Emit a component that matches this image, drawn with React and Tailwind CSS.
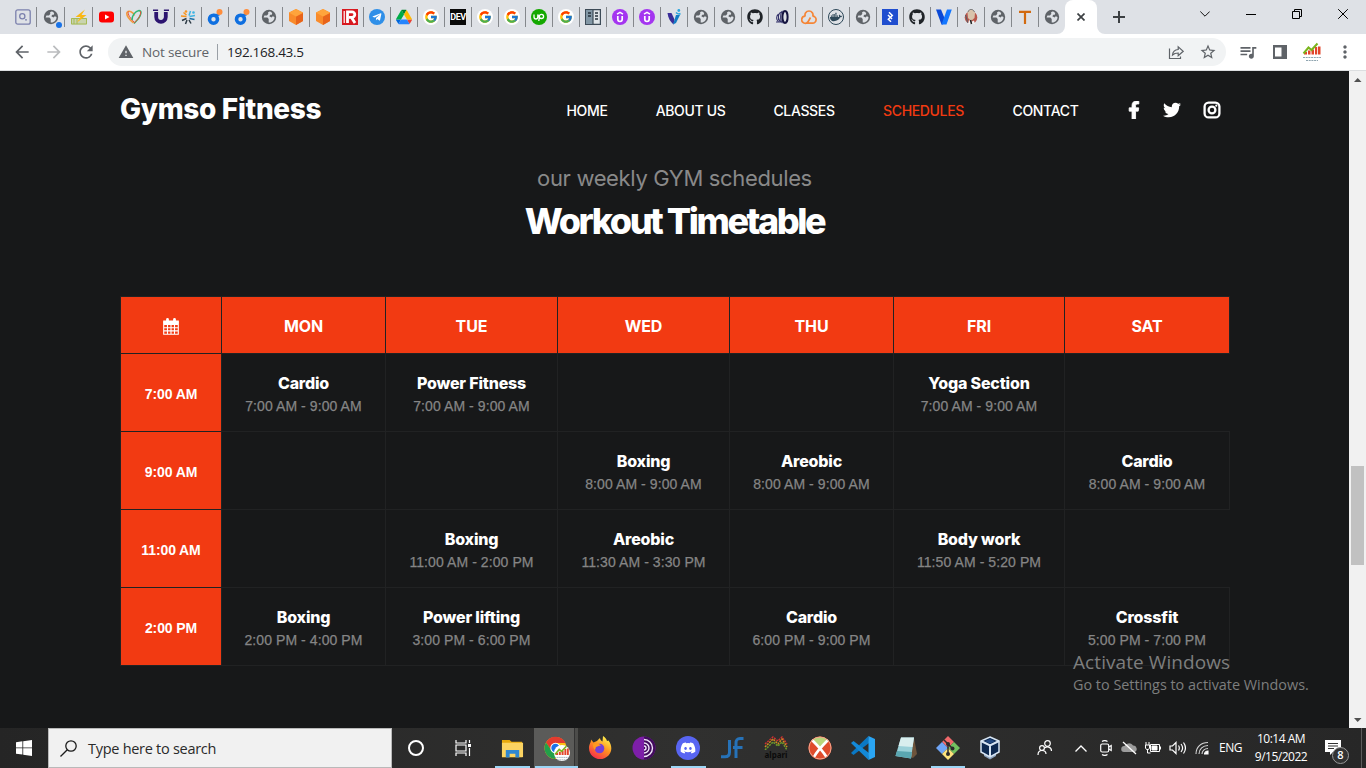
import React from "react";
import { FcGoogle } from "react-icons/fc";
import { FaGithub, FaTelegramPlane, FaDocker, FaDiscord, FaFacebookF, FaTwitter } from "react-icons/fa";
import { MdQueueMusic, MdStarBorder, MdArrowBack, MdArrowForward, MdRefresh, MdMoreVert, MdWarning } from "react-icons/md";

/* ---------- tab favicons ---------- */
const S = ({ children, box = "0 0 16 16", className = "size-4" }) => (
  <svg viewBox={box} className={className} fill="none">{children}</svg>
);
const Globe = () => (
  <S>
    <circle cx="8" cy="8" r="7.200" fill="#5f6368" />
    <path d="M8.500 2.600C7 3 6.600 4 7.400 4.800L6 6.600H3.400L2.600 8.400h3.800l1.300 1.500v3.600c3.400.3 5.800-2.200 5.800-5.500l-1.700-.8-1.300 1.200-2.200-1.200 1-1.500h1.500l.4-1.700C10.500 3.300 9.500 2.600 8.500 2.600Z" fill="#dee1e6" />
  </S>
);
const Search1 = () => (
  <S>
    <rect x=".8" y=".8" width="14.400" height="14.400" rx="2" stroke="#7b80ad" strokeWidth="1.300" />
    <circle cx="7.300" cy="7.300" r="2.600" stroke="#7b80ad" strokeWidth="1.300" />
    <path d="M10 10.800h2" stroke="#7b80ad" strokeWidth="1.300" />
  </S>
);
const GlobeDot = () => (
  <span className="relative flex">
    <Globe />
    <span className="absolute -right-[3px] -bottom-[3px] size-[6px] rounded-full bg-[#1a73e8]" />
  </span>
);
const Bolt = () => (
  <S>
    <path d="M0 9h16v6.500H0z" fill="#c9d4ae" />
    <path d="M.5 9.500h15v5.500H.5zM3 9v6M6 9v6" stroke="#a5ba55" />
    <path d="M14 .5 4.500 8h5L6 13.500 15.500 6h-5Z" fill="#fbb713" />
  </S>
);
const YouTube = () => (
  <S><rect x="0" y="2.500" width="15" height="11" rx="3" fill="#f00" /><path d="m6 5.500 4.500 2.500L6 10.500Z" fill="#fff" /></S>
);
const Loops = () => (
  <S>
    <path d="M7.500 14C4 11 0 6 1 3.500 3 1 7 3 8.500 6.500" stroke="#f29a3c" strokeWidth="1.500" />
    <path d="M2.500 2.500C1 5 5 10 8 13" stroke="#e8503a" strokeWidth="1" />
    <path d="M6 11C6 7 9 2 13 1.500c3 0 2.500 4-.5 8L8 14.500" stroke="#2eb872" strokeWidth="1.500" />
    <path d="M14 2c2 2-1 8-6 12" stroke="#e8503a" strokeWidth="1" />
  </S>
);
const Horseshoe = () => (
  <S>
    <path d="M3.200 3v5a4.800 4.800 0 0 0 9.600 0V3" stroke="#2c1470" strokeWidth="3.800" />
    <path d="M0 1.200h5.100M10.900 1.200H16" stroke="#2c1470" strokeWidth="1.600" />
  </S>
);
const Burst = () => (
  <S>
    <g strokeWidth="1.500">
      <path d="M6.500 7.500 1 7M6.500 6 3.500 3.500" stroke="#f7941e" /><path d="M9 6.500 10.500 2M9.500 7.500 15 6.500" stroke="#3eb4e4" />
      <path d="m9.500 9.500 5 1" stroke="#1c6ea4" /><path d="m6.500 9.500-4.500 2m5-.5-1.500 4m3.500-4 2 3.500" stroke="#2d3a45" />
    </g>
    <circle cx="6" cy="2.500" r="1.300" fill="#f7941e" /><circle cx="13.500" cy="3.500" r="1.300" fill="#3eb4e4" />
  </S>
);
const BlueD = () => (
  <S>
    <circle cx="6.500" cy="10.200" r="4" stroke="#0f6fe0" strokeWidth="3.600" />
    <path d="M6.500 5.800h6" stroke="#0f6fe0" strokeWidth="2" />
    <circle cx="12.500" cy="3" r="3" fill="#ff8d3b" />
  </S>
);
const Cube = () => (
  <S>
    <path d="m8 0 7 3.500v8.500L8 16l-7-4V3.500Z" fill="#f98b2b" /><path d="M8 7.500 15 4v8l-7 4Z" fill="#e8641b" />
    <path d="m8 0 7 3.700-7 3.800-7-3.800Z" fill="#ffa43c" />
  </S>
);
const Rbox = () => (
  <S>
    <path d="M0 0h16v16H0z" fill="#d81920" />
    <path d="M2.200 2v12" stroke="#fff" strokeWidth="1.200" />
    <path d="M5.500 14V2.800h4.500a2.600 2.600 0 0 1 0 5.600H7m2.500 0 3.500 5.600" stroke="#fff" strokeWidth="2.800" />
  </S>
);
const Telegram = () => (
  <span className="flex size-4 items-center justify-center rounded-full bg-[#2f8fe8]"><FaTelegramPlane className="mr-px size-[10px] text-white" /></span>
);
const Drive = () => (
  <S box="0 0 87.300 78">
    <path d="m6.600 66.850 3.850 6.650c.8 1.400 1.950 2.500 3.300 3.300l13.750-23.800H0c0 1.550.4 3.100 1.200 4.500z" fill="#0066da" />
    <path d="M43.650 25 29.900 1.200c-1.350.8-2.500 1.900-3.300 3.300L1.200 48.500A9 9 0 0 0 0 53h27.500z" fill="#00ac47" />
    <path d="M73.550 76.800c1.350-.8 2.500-1.900 3.300-3.300l1.600-2.750L86.100 57.500c.8-1.400 1.200-2.950 1.200-4.500H59.800l5.850 11.500z" fill="#ea4335" />
    <path d="M43.650 25 57.400 1.200C56.050.4 54.500 0 52.900 0H34.400c-1.600 0-3.150.45-4.500 1.200z" fill="#00832d" />
    <path d="M59.800 53H27.500L13.750 76.800c1.350.8 2.900 1.200 4.500 1.200h50.800c1.600 0 3.150-.45 4.500-1.200z" fill="#2684fc" />
    <path d="m73.400 26.500-12.700-22c-.8-1.400-1.950-2.500-3.300-3.300L43.650 25 59.800 53h27.450c0-1.550-.4-3.100-1.200-4.500z" fill="#ffba00" />
  </S>
);
const Google = () => (
  <span className="flex size-4 items-center justify-center rounded-full bg-white"><FcGoogle className="size-[14px]" /></span>
);
const Dev = () => (
  <span className="flex size-4 items-center justify-center bg-[#0a0a0a] font-['Roboto'] text-[9px] leading-none font-bold tracking-[-0.4px] text-white">DEV</span>
);
const Upwork = () => (
  <S>
    <circle cx="8" cy="8" r="8" fill="#14a800" />
    <path d="M3 5.500v2.600a1.900 1.900 0 0 0 3.800 0V5.500c.6 2 2 4 3.700 4a2.100 2.100 0 1 0-2.100-2.200L7.800 12" stroke="#fff" strokeWidth="1.300" />
  </S>
);
const Panel = () => (
  <S>
    <path d="M.6.6h14.800v14.800H.6z" fill="#dfe5e9" stroke="#3d4b57" strokeWidth="1.200" />
    <path d="M1 1h7v14H1z" fill="#8297a5" /><path d="M8 1v14" stroke="#3d4b57" strokeWidth="1.200" />
    <path d="M3 4h3M3 7h3M10 4h3M10 7h3M10 10h3" stroke="#26323b" strokeWidth="1.600" />
  </S>
);
const PurpleU = () => (
  <S>
    <circle cx="8" cy="8" r="8" fill="#a435f0" />
    <path d="M5.800 7v3.300a2.200 2.200 0 0 0 4.400 0V7" stroke="#fff" strokeWidth="1.700" />
    <path d="m5 5.200 3-1.900 3 1.900" stroke="#fff" strokeWidth="1.400" />
  </S>
);
const Vi = () => (
  <S>
    <path d="M1.500 4h4l3 6.500-1 5C4.500 13 2 9 1.500 4Z" fill="#3a2d99" /><path d="M10 6h4L10 14l-3 1.500Z" fill="#127cc4" />
    <path d="M10 3.500c2 2 3 2 4.500 1" stroke="#2ba6df" strokeWidth="1.600" /><circle cx="12.800" cy="1.500" r="1.400" fill="#2ba6df" />
  </S>
);
const Coil = () => (
  <S>
    <ellipse cx="11" cy="8" rx="2.600" ry="6" stroke="#151440" strokeWidth="2" />
    <path d="M8.500 2C6 4 6 12 8.500 14M6.500 3C4 6 4 10 6.500 13M4.500 5v6M4.500 5C2 7 2 11 4.500 12.500M2 13h5" stroke="#34336b" strokeWidth="1.100" />
  </S>
);
const OrangeCloud = () => (
  <S>
    <path d="M4.300 7.500a4 4 0 1 1 7.400 0M4.300 7.200a3.500 3.500 0 1 0 2.900 5.300L9.500 8.500M11.700 7.200a3.500 3.500 0 1 1-.2 7H5" stroke="#f58536" strokeWidth="1.700" />
  </S>
);
const DockerIcon = () => (
  <span className="flex size-4 items-center justify-center rounded-full border border-[#2d4758]"><FaDocker className="size-[12px] text-[#2d4758]" /></span>
);
const BlueBox = () => (
  <S>
    <path d="M0 0h16v16H0z" fill="#204ecf" />
    <path d="m7 3.200 3.300 3.300-4 3.800 2.700 2.500M6 6l4 4" stroke="#fff" strokeWidth="1.500" />
  </S>
);
const BlueV = () => (
  <S>
    <path d="M0 .500h5l3.500 8.500L7 15.500H5.500Z" fill="#0b49d6" /><path d="M11 .500h4.800L10.500 15.500H5.500Z" fill="#1477ff" />
  </S>
);
const Butler = () => (
  <S>
    <circle cx="8" cy="8.500" r="6.300" fill="#b8564b" /><path d="M2.500 6C4 10 4 12 5 14" stroke="#4f5f6b" />
    <path d="M4.500 4C5-.5 11.500-.5 12 4l-.5 5L8 12 5 9Z" fill="#d9c3ab" />
    <path d="M5 3C6-.5 10-.5 11.500 3" stroke="#777" /><path d="m5 15 1-4 3 1.500 2-1 1 3.500Z" fill="#f2f2f2" /><path d="m7.500 11 1 4" stroke="#222" strokeWidth="1.500" />
  </S>
);
const LetterT = () => <S><path d="M2 2.900h12M8 2.700V15" stroke="#d26a10" strokeWidth="2.200" /></S>;
const GH = () => <FaGithub className="size-4 text-[#1f2328]" />;

const tabs = [
  Search1, GlobeDot, Bolt, YouTube, Loops, Horseshoe, Burst, BlueD, BlueD, Globe, Cube, Cube, Rbox, Telegram, Drive, Google, Dev, Google,
  Google, Upwork, Google, Panel, PurpleU, PurpleU, Vi, Globe, Globe, GH, Coil, OrangeCloud, DockerIcon, Globe, BlueBox, GH, BlueV, Butler, Globe, LetterT, Globe,
];

function TabStrip() {
  return (
    <div className="flex h-[34px] bg-[#dee1e6] pl-[9px]">
      {tabs.map((Icon, i) => (
        <div key={i} className={`flex h-[34px] shrink-0 items-center ${i < 4 ? "w-[28px]" : i === 38 ? "w-[26px]" : "w-[27px]"}`}>
          <div className="flex flex-1 justify-center"><Icon /></div>
          {i < 38 && <div className="h-5 w-px bg-[#85888c]" />}
        </div>
      ))}
      <div className="relative flex w-8 shrink-0 items-center justify-center rounded-t-lg bg-white">
        <svg viewBox="0 0 8 8" className="absolute bottom-0 -left-2 size-2"><path d="M8 0v8H0a8 8 0 0 0 8-8Z" fill="#fff" /></svg>
        <svg viewBox="0 0 8 8" className="absolute -right-2 bottom-0 size-2"><path d="M0 0v8h8a8 8 0 0 1-8-8Z" fill="#fff" /></svg>
        <svg viewBox="0 0 8 8" className="size-2" stroke="#3c4043" strokeWidth="1.700"><path d="m.5.5 7 7m0-7-7 7" /></svg>
      </div>
      <div className="flex w-[44px] items-center justify-center">
        <svg viewBox="0 0 12 12" className="size-3" stroke="#3c4043" strokeWidth="2"><path d="M6 0v12M0 6h12" /></svg>
      </div>
      <div className="ml-auto flex h-7 shrink-0 items-center">
        <div className="flex w-[46px] justify-center"><svg viewBox="0 0 10 6" className="h-[6px] w-[10px]" fill="none" stroke="#111"><path d="m.3.500 4.700 4.700L9.700.500" /></svg></div>
        <div className="flex w-[46px] justify-center"><div className="h-px w-[10px] bg-black" /></div>
        <div className="flex w-[46px] justify-center"><svg viewBox="0 0 10 10" className="size-[10px]" fill="none" stroke="#000"><path d="M.5 2.500h7v7h-7zM2.500 2.500v-2h7v7h-2" /></svg></div>
        <div className="flex w-[46px] justify-center"><svg viewBox="0 0 10 10" className="size-[10px]" fill="none" stroke="#000"><path d="m.2.200 9.600 9.600m0-9.600L.2 9.800" /></svg></div>
      </div>
    </div>
  );
}

const MiniChart = ({ className }) => (
  <svg viewBox="0 0 20 20" className={className}>
    <circle cx="10" cy="10" r="10" fill="#fff" />
    <path d="M2 12.500V10h3v2.500zM6 12.500V8.500h2.500v4zM9.500 12.500V7.500H12v5zM13 12.500V5h2.200v7.500zM16 12.500V4.500h2.500v8z" fill="#e2452a" />
    <path d="m1.500 11.500 5-6 3 2.500 6-6.500" fill="none" stroke="#7ab51d" strokeWidth="2" />
    <path d="M1 15.500h18M4 18.500h12" stroke="#8fa5b0" strokeWidth="1" strokeDasharray="2 .7" />
  </svg>
);

function Toolbar() {
  return (
    <div className="flex h-[37px] items-center border-b border-[#dcdee0] bg-white text-[#5f6368]">
      <div className="flex w-[108px] items-center gap-3 pl-3">
        <MdArrowBack className="size-5" />
        <MdArrowForward className="size-5 text-[#babcbe]" />
        <MdRefresh className="size-5" />
      </div>
      <div className="flex h-7 w-[1118px] items-center rounded-full bg-[#f1f3f4] pr-[9px] pl-[10px] font-['Open_Sans',sans-serif] text-[13.500px]">
        <MdWarning className="size-4" />
        <span className="ml-2 w-[67px] whitespace-nowrap tracking-[-0.150px]">Not secure</span>
        <span className="mr-[9px] ml-2 h-4 w-px bg-[#9aa0a6]" />
        <span className="tracking-[-0.280px] whitespace-nowrap text-[#202124]">192.168.43.5</span>
        <span className="ml-auto flex items-center gap-[15px]">
          <svg viewBox="0 0 16 16" className="size-4" fill="none" stroke="#5f6368" strokeWidth="1.200"><path d="M1.500 4.500v10h11v-2M4.500 11c.3-3.500 2.500-5.300 5.700-5.500V2.800l5 4.500-5 4.400V9C7.500 9 6 9.500 4.500 11Z" /></svg>
          <MdStarBorder className="size-[18px]" />
        </span>
      </div>
      <div className="ml-[12px] flex items-center">
        <MdQueueMusic className="size-5" />
        <svg viewBox="0 0 14 14" className="ml-[15px] h-[14px] w-[14px]"><path d="M0 0h14v14H0zM2 2.500v9h6.500v-9z" fill="#5f6368" fillRule="evenodd" /></svg>
        <MiniChart className="ml-[15px] size-5" />
        <MdMoreVert className="ml-[13px] size-[20px]" />
      </div>
    </div>
  );
}

/* ---------- page ---------- */
const nav = [
  ["HOME", "w-[42px]"], ["ABOUT US", "w-[69px]"], ["CLASSES", "w-[62px]"], ["SCHEDULES", "w-[81px]"], ["CONTACT", "w-[67px]"],
];
const days = ["MON", "TUE", "WED", "THU", "FRI", "SAT"];
const rows = [
  ["7:00 AM", [["Cardio", "7:00 AM - 9:00 AM"], ["Power Fitness", "7:00 AM - 9:00 AM"], null, null, ["Yoga Section", "7:00 AM - 9:00 AM"]]],
  ["9:00 AM", [null, null, ["Boxing", "8:00 AM - 9:00 AM"], ["Areobic", "8:00 AM - 9:00 AM"], null, ["Cardio", "8:00 AM - 9:00 AM"]]],
  ["11:00 AM", [null, ["Boxing", "11:00 AM - 2:00 PM"], ["Areobic", "11:30 AM - 3:30 PM"], null, ["Body work", "11:50 AM - 5:20 PM"]]],
  ["2:00 PM", [["Boxing", "2:00 PM - 4:00 PM"], ["Power lifting", "3:00 PM - 6:00 PM"], null, ["Cardio", "6:00 PM - 9:00 PM"], null, ["Crossfit", "5:00 PM - 7:00 PM"]]],
];

function Site() {
  return (
    <div className="flex h-[657px] bg-[#171819] font-['Inter',sans-serif]">
      <div className="w-[1349px] pl-[120px]">
        <header className="flex h-[74px] items-center text-white">
          <div className="w-[446px] pt-px text-[28px] leading-none font-extrabold tracking-[-0.330px] whitespace-nowrap">Gymso Fitness</div>
          <nav className="flex gap-12 pt-1 text-[14px] font-medium tracking-[-0.350px] whitespace-nowrap">
            {nav.map(([t, w]) => (
              <a key={t} className={`${w} flex justify-center ${t === "SCHEDULES" ? "text-[#f13a11]" : ""}`}>{t}</a>
            ))}
          </nav>
          <div className="ml-[46px] flex items-center gap-[20px] pt-1">
            <FaFacebookF className="h-[18px] w-[18px]" stroke="#fff" strokeWidth="24" />
            <FaTwitter className="size-[18px]" />
            <svg viewBox="0 0 18 18" className="ml-[2px] size-[18px]" fill="none" stroke="#fff">
              <rect x="1.600" y="1.600" width="14.800" height="14.800" rx="4" strokeWidth="2.300" />
              <circle cx="9" cy="9" r="3.400" strokeWidth="2.300" /><circle cx="13.300" cy="4.700" r="1.100" fill="#fff" stroke="none" />
            </svg>
          </div>
        </header>
        <div className="w-[1109px] pt-[18px] text-center">
          <h6 className="h-[30px] text-[22px] leading-[30px] font-normal tracking-[-0.350px] text-[#898989]">our weekly GYM schedules</h6>
          <h2 className="mt-[4px] h-[49px] text-[36px] leading-[48px] font-extrabold tracking-[-2.450px] text-white">Workout Timetable</h2>
        </div>
        <table className="mt-[50px] w-[1110px] table-fixed border-collapse text-center">
          <colgroup>
            <col className="w-[101px]" /><col className="w-[164px]" /><col className="w-[172px]" /><col className="w-[172px]" />
            <col className="w-[164px]" /><col className="w-[171px]" /><col className="w-[165px]" />
          </colgroup>
          <thead>
            <tr className="h-[57px] bg-[#f23a12] text-[16px] font-extrabold text-white">
              <th className="border border-[#212223] p-0">
                <svg viewBox="0 0 16 17" className="relative top-px mx-auto h-[17px] w-4" fill="none" stroke="#fff">
                  <path d="M.7 3h14.600v13.300H.7zM1 6.500h14M1 9.700h14M1 12.900h14M4.500 6.500V16M8 6.500V16M11.500 6.500V16" strokeWidth="1.100" />
                  <path d="M1 3.500h14v2H1z" fill="#fff" /><path d="M4.500 1.500v3M11.500 1.500v3" strokeWidth="2.800" strokeLinecap="round" />
                </svg>
              </th>
              {days.map((d) => <th key={d} className="border border-[#212223] p-0 pt-[2px] tracking-[-0.100px]">{d}</th>)}
            </tr>
          </thead>
          <tbody>
            {rows.map(([time, cells]) => (
              <tr key={time} className="h-[78px]">
                <td className="border border-[#212223] bg-[#f23a12] p-0 pt-[3px] font-['Liberation_Sans',sans-serif] text-[14px] font-bold tracking-[-0.100px] text-white">{time}</td>
                {cells.map((c, i) => (
                  <td key={i} className="border border-[#212223] p-0 whitespace-nowrap">
                    {c && (
                      <div className="pt-[2px]">
                        <div className="text-[16px] leading-6 font-extrabold tracking-[-0.180px] text-white">{c[0]}</div>
                        <div className="-mb-px pt-px font-['Liberation_Sans',sans-serif] text-[14px] leading-[21px] tracking-[0.080px] text-[#858585] [-webkit-text-stroke:0.25px_#858585]">{c[1]}</div>
                      </div>
                    )}
                  </td>
                ))}
              </tr>
            ))}
          </tbody>
        </table>
      </div>
      <div className="flex w-[17px] flex-col items-center bg-[#f1f1f1]">
        <svg viewBox="0 0 17 17" className="size-[17px]"><path d="M5 11h7.500L8.700 7Z" fill="#505050" /></svg>
        <div className="mt-[378px] h-[99px] w-[13px] bg-[#c1c1c1]" />
        <svg viewBox="0 0 17 17" className="mt-auto size-[17px]"><path d="M5 7h7.500L8.700 11Z" fill="#505050" /></svg>
      </div>
    </div>
  );
}

/* ---------- taskbar ---------- */
const T = ({ children, className = "size-6" }) => <svg viewBox="0 0 24 24" className={className} fill="none">{children}</svg>;
const Explorer = () => (
  <T className="size-[23px]">
    <path d="M1 3h8l2 2h11v16H1z" fill="#e8a90c" /><path d="M1 6h22v15H1z" fill="#fcd462" />
    <path d="M5 21.500v-8h14v8h-4v-4H9v4Z" fill="#2f87d0" />
  </T>
);
const Chrome = () => (
  <div className="relative flex">
    <T>
      <circle cx="11.500" cy="12" r="11" fill="#fbc116" /><path d="M2 6.500A11 11 0 0 1 21.500 7H11.500L7 14Z" fill="#e33b2e" />
      <path d="M2 6.500a11 11 0 0 0 9 16.500l4.500-8-7 1Z" fill="#22a04a" /><circle cx="11.500" cy="12" r="5.200" fill="#fff" /><circle cx="11.500" cy="12" r="4.200" fill="#1a73e8" />
    </T>
    <MiniChart className="absolute top-[9px] left-[10px] size-4" />
  </div>
);
const Firefox = () => (
  <T>
    <defs>
      <linearGradient id="ff" x1="18" y1="1" x2="5" y2="22" gradientUnits="userSpaceOnUse"><stop stopColor="#fff04a" /><stop offset=".45" stopColor="#ff9320" /><stop offset="1" stopColor="#f5294e" /></linearGradient>
    </defs>
    <path d="M1 12C1 8 3 7 3 3.500l2.500 3L9 5c0 0 1.500-2 3-3 0 2 1.500 3 2.500 3.500L15 0c2 1 3.500 3 4 5l1.500-.5C24 9 24.500 15 20.500 19.500 13 27 1 22 1 12Z" fill="url(#ff)" />
    <circle cx="11.500" cy="12.500" r="4.800" fill="#7540d8" /><path d="M5 8c4-2 6 0 8 1.500-2 0-3 1-5 1.500L7 14c-2-2-2-4-2-6Z" fill="#ff9a1f" />
  </T>
);
const Tor = () => (
  <T>
    <circle cx="12" cy="12" r="11.500" fill="#7d1fa8" /><path d="M12 .5a11.500 11.500 0 0 1 0 23Z" fill="#420c5d" />
    <path d="M12 3.500a8.500 8.500 0 0 1 0 17M12 7a5 5 0 0 1 0 10M12 10a2 2 0 0 1 0 4" stroke="#f1e5fa" strokeWidth="1.400" />
  </T>
);
const Discord = () => <span className="flex size-6 items-center justify-center rounded-full bg-[#5865f2]"><FaDiscord className="size-4 text-white" /></span>;
const Jf = () => (
  <T>
    <path d="M1 20.800h4c3.500 0 4.500-1.500 4.500-4.500V4M16 22V7.500c0-4 1-5 4-5h3.500M13 11.500h9.500" stroke="#2672b8" strokeWidth="3" />
  </T>
);
const Alpari = () => (
  <div className="flex flex-col items-center">
    <svg viewBox="0 0 24 14" className="h-[14px] w-6" fill="none" strokeDasharray="2 1" strokeWidth="1.500">
      <path d="M1 8 9 1l5 4 4-4 5 7" stroke="#c33" /><path d="M1 11 9 3l5 5 4-5 5 8" stroke="#d18b20" /><path d="m1 14 8-8 5 4 4-4 5 8" stroke="#6c9a2b" />
    </svg>
    <span className="font-['Noto_Sans',sans-serif] text-[8px] leading-[10px] font-bold tracking-[0px] text-[#0b0b0b]">alpari</span>
  </div>
);
const XBall = () => (
  <T>
    <circle cx="12" cy="12" r="11.500" fill="#df4b2b" /><path d="M4.500 3.500a11.500 11.500 0 0 1 15 0L12 12Z" fill="#b9d67b" />
    <path d="M4 4c4 4 11 11 14.500 17M20 4C16 8 9 15 6 21" stroke="#fff" strokeWidth="2.600" /><circle cx="12" cy="12" r="11" stroke="#f2a58e" />
  </T>
);
const VsCode = () => (
  <T>
    <path d="M18 7 2.500 19 0 17 17.500 0Z" fill="#0a78c4" /><path d="M18 17 2.500 5 0 7l17.500 17Z" fill="#1389d8" /><path d="M17.500 0 24 3v18l-6.500 3Z" fill="#2aa5f3" />
  </T>
);
const Notebook = () => (
  <T>
    <path d="m20 2 3 16-4 4-3-1Z" fill="#6d543c" /><path d="M7 1.500h13l-3 21-15.500-2.500Z" fill="#9ad0d8" /><path d="M7 1.500h13l-1.500 9.500-14-1Z" fill="#d9eeee" /><path d="m3 15 15 1-1 6.500L1.500 20Z" fill="#5aa6b1" />
  </T>
);
const Git = () => (
  <T>
    <path d="m12 0 6 6-6 6-6-6Z" fill="#f0696b" /><path d="m6 6 6 6-6 6-6-6Z" fill="#6fa5f5" /><path d="m18 6 6 6-6 6-6-6Z" fill="#73c260" /><path d="m12 12 6 6-6 6-6-6Z" fill="#fde37c" />
    <path d="m8 4 4 4v10M12 8l4.500 4.500" stroke="#2b2b2b" strokeWidth="1.500" /><circle cx="12" cy="8" r="2" fill="#2b2b2b" /><circle cx="12" cy="18" r="2" fill="#2b2b2b" /><circle cx="16.500" cy="12.500" r="2" fill="#2b2b2b" />
  </T>
);
const VBox = () => (
  <T>
    <path d="m6 20 6 3.500 6-3.500v-3H6Z" fill="#8fa6c2" /><path d="m12 1 9 4v11l-9 5-9-5V5Z" fill="#0d2950" stroke="#d8e6f4" strokeWidth="1.500" />
    <path d="m3 5 9 4.500L21 5M12 9.500V21" stroke="#d8e6f4" strokeWidth="2" /><path d="m12 3 5 2.200-5 2.300-5-2.300Z" fill="#234a82" />
  </T>
);
const apps = [
  [Explorer, "w-[44px]", "w-[35px]"], [Chrome, "w-[44px]", "w-[43px]"], [Firefox, "w-[44px]"], [Tor, "w-[44px]"], [Discord, "w-[44px]", "w-[35px]"],
  [Jf, "w-[44px]"], [Alpari, "w-[44px]"], [XBall, "w-[43px]"], [VsCode, "w-[43px]"], [Notebook, "w-[43px]"], [Git, "w-[42px]", "w-[34px]"], [VBox, "w-[41px]"],
];

function Taskbar() {
  return (
    <div className="flex h-10 bg-linear-to-r from-[#252525] via-[#30302f] to-[#272727] font-['Open_Sans',sans-serif] text-white">
      <div className="flex w-12 shrink-0 items-center justify-center">
        <svg viewBox="0 0 16 16" className="size-4" fill="#fff"><path d="m0 2.200 6.400-.9v6.200H0zM7.200 1.200 16 0v7.500H7.200zM0 8.300h6.400v6.300L0 13.700zM7.200 8.300H16V16l-8.800-1.300z" /></svg>
      </div>
      <div className="flex w-[344px] shrink-0 items-center border border-[#b9b9b9] bg-[#f1f1f1] pl-[11px] text-[#2a2a2a]">
        <svg viewBox="0 0 17 17" className="size-[17px]" fill="none" stroke="#1c1c1c" strokeWidth="1.300"><circle cx="11" cy="6" r="5.200" /><path d="M7.300 9.700.5 16.500" /></svg>
        <span className="ml-[11px] pt-px text-[14.500px] tracking-[-0.280px] whitespace-nowrap">Type here to search</span>
      </div>
      <div className="flex w-12 shrink-0 items-center justify-center"><div className="size-[16px] rounded-full border-2 border-white" /></div>
      <div className="flex w-[50px] shrink-0 items-center pl-[15px]">
        <svg viewBox="0 0 17 16" className="h-4 w-[17px]" fill="none" stroke="#fff" strokeWidth="1.200"><path d="M1 0v3h10V0M1 16v-3h10v3M1 5h10v6H1zM14.500 0v3M14.500 8v8" /><path d="M13 4h3v3h-3z" fill="#fff" stroke="none" /></svg>
      </div>
      {apps.map(([Icon, w, line], i) => (
        <div key={i} className={`relative flex shrink-0 items-center justify-center ${w} ${i === 1 ? "bg-[#5b5b59]" : ""}`}>
          <Icon />
          {i === 1 && <div className="absolute top-0 right-0 h-full w-1 border-l border-[#333] bg-[#4c4c4a]" />}
          {line && <div className={`absolute bottom-0 h-[2px] bg-[#9bd5f5] ${line}`} />}
        </div>
      ))}
      <div className="flex items-center pl-[27px]">
        <svg viewBox="0 0 16 16" className="size-4" fill="none" stroke="#fff" strokeWidth="1.200"><circle cx="10.500" cy="3.500" r="2.800" /><circle cx="5" cy="8" r="2.400" /><path d="M1 15c0-3 1.500-4.500 4-4.500S9 12 9 14M8 8c1-1.500 6.500-2 6.500 3" /></svg>
        <svg viewBox="0 0 12 7" className="ml-[22px] h-[7px] w-3" fill="none" stroke="#fff" strokeWidth="1.300"><path d="m.5 6.500 5.500-5.500 5.500 5.500" /></svg>
        <svg viewBox="0 0 12 16" className="ml-[13px] h-4 w-3" fill="none" stroke="#fff" strokeWidth="1.200"><rect x=".7" y="4" width="8" height="8" rx="1.500" /><path d="m8.700 7 2.500-1.500v5L8.700 9M2 1.500C3.500.500 6 .500 7.500 1.500M2 14.500c1.500 1 4 1 5.500 0" /></svg>
        <svg viewBox="0 0 17 14" className="ml-[9px] h-[14px] w-[17px]"><path d="M3 11a3 3 0 0 1 .5-6A5 5 0 0 1 12 4.500a3.500 3.500 0 0 1 2 6.500Z" fill="#9c9c9c" /><path d="m2 1 13 12" stroke="#fff" strokeWidth="1.300" /></svg>
        <svg viewBox="0 0 16 12" className="ml-[7px] h-3 w-4" fill="none" stroke="#fff"><path d="M5.500 2.500h9v7h-9zM15.500 4.500v3M1 0v3M4 0v3M.5 3h4v3l-1 1.500h-2L.5 6zM2.500 7v4h3" /><path d="M7 4h5v4H7z" fill="#fff" /></svg>
        <svg viewBox="0 0 17 14" className="ml-2 h-[14px] w-[17px]" fill="none" stroke="#fff" strokeWidth="1.200"><path d="M1 5h2.500L7 1.500v11L3.500 9H1zM9.500 4.500c1 1.500 1 3.500 0 5M12 3c2 2.500 2 5.500 0 8M14.500 1.500c2.500 3.500 2.500 7.500 0 11" /></svg>
        <svg viewBox="0 0 14 14" className="ml-[9px] size-[14px]" fill="none" stroke="#fff" strokeWidth="1.100"><path d="M1 13C1 6 6 1.500 13 1.500M4 13c0-5 4-8.500 9-8.500M7 13c0-3 2.500-5.500 6-5.500" stroke="#d5d5d5" /><path d="M9.500 13c0-1.500 1.500-3 3.500-3v3z" fill="#fff" /></svg>
        <span className="ml-[10px] w-[24px] text-[12px] tracking-[-0.500px]">ENG</span>
        <div className="ml-[7px] w-[62px] text-center text-[12px] leading-[18px] tracking-[-0.500px] whitespace-nowrap"><div>10:14 AM</div><div>9/15/2022</div></div>
        <div className="relative ml-[13px] h-6 w-6">
          <svg viewBox="0 0 16 15" className="mt-1 h-[15px] w-4"><path d="M0 0h16v12H8l-3 3v-3H0z" fill="#fff" /><path d="M3 3.500h10M3 6h10M3 8.500h6" stroke="#333" /></svg>
          <div className="absolute top-[11px] left-[7px] flex size-[17px] items-center justify-center rounded-full border border-[#999] bg-[#333] text-[11px] font-semibold">8</div>
        </div>
      </div>
      <div className="mr-1 ml-auto w-px bg-[#5c5c5c]" />
    </div>
  );
}

export default function App() {
  return (
    <div className="relative h-[768px] w-[1366px] overflow-hidden">
      <TabStrip />
      <Toolbar />
      <Site />
      <Taskbar />
      <div className="absolute top-[650px] left-[1073px] font-['Open_Sans',sans-serif] whitespace-nowrap text-[#7d7e7e]">
        <div className="text-[19px] leading-6 tracking-[0.080px]">Activate Windows</div>
        <div className="text-[14.400px] leading-[22px]">Go to Settings to activate Windows.</div>
      </div>
    </div>
  );
}
